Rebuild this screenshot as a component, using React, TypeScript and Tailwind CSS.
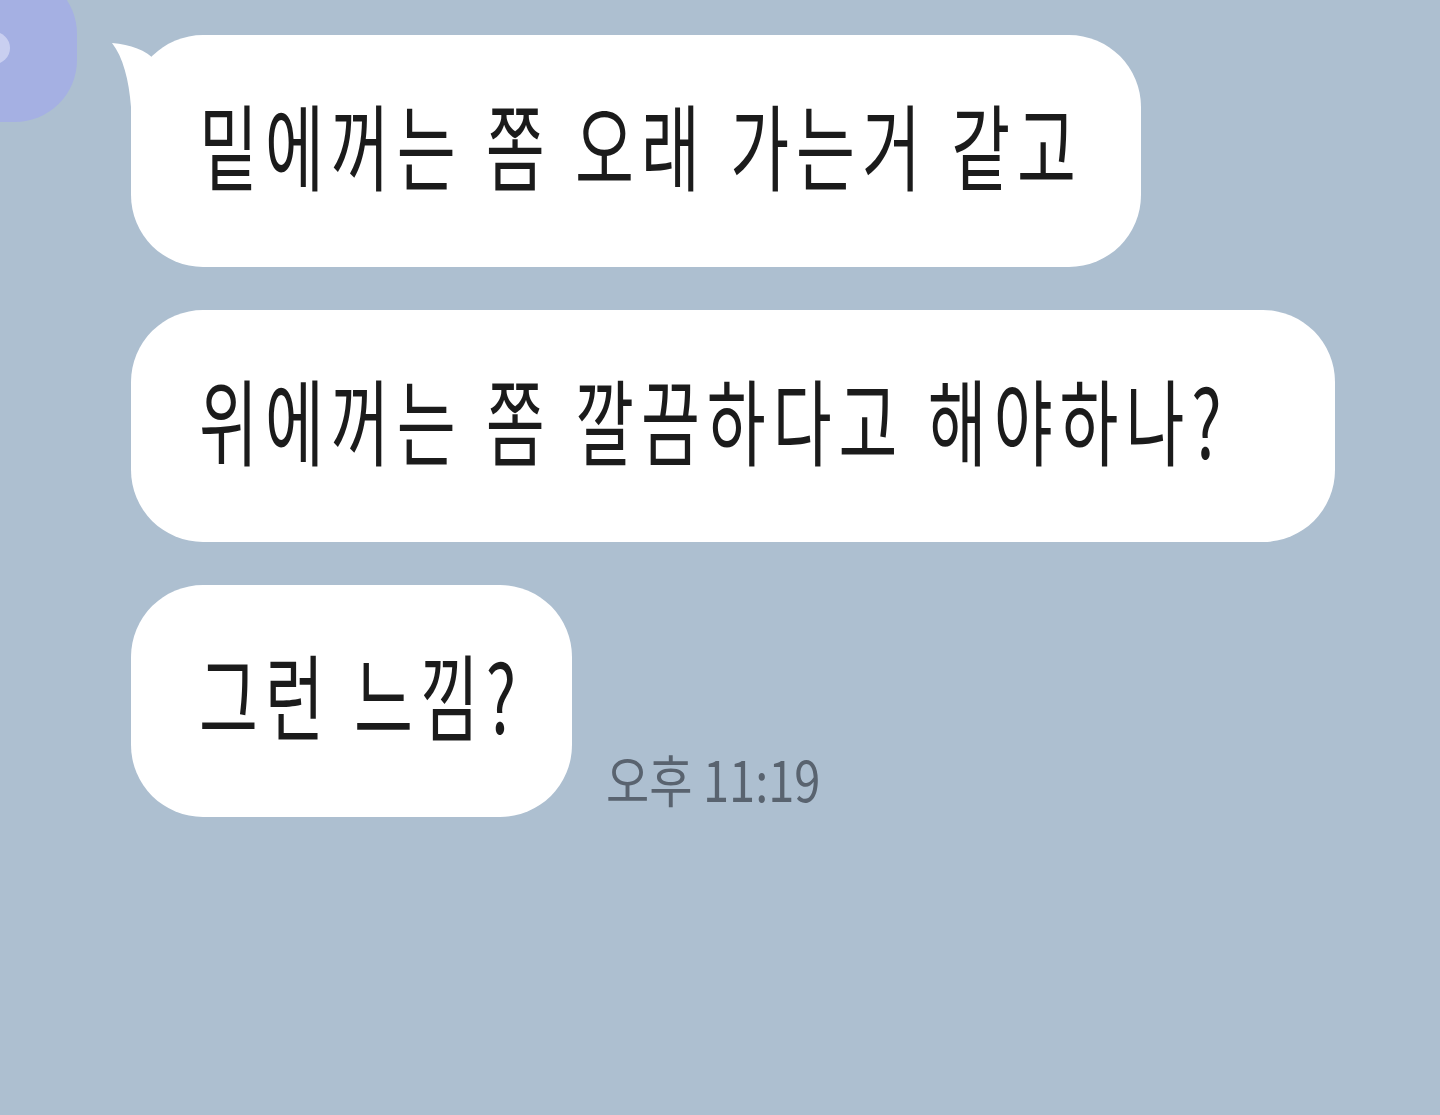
const messages = [
  { id: 1, text: "밑에꺼는 쫌 오래 가는거 같고", width: "w-[1010px]", tail: true },
  { id: 2, text: "위에꺼는 쫌 깔끔하다고 해야하나?", width: "w-[1204px]", tail: false },
  { id: 3, text: "그런 느낌?", width: "w-[441px]", tail: false },
];

function Tail() {
  // little speech-bubble tail on the first message
  return (
    <svg
      className="absolute -left-[20px] top-0 overflow-visible"
      width="60"
      height="90"
      viewBox="-20 0 60 90"
    >
      <path
        d="M -19 8 C 0 10, 14 14, 26 27 L 40 40 L 40 90 L 0 90 L 0 72 C -2 45, -8 22, -19 8 Z"
        fill="#ffffff"
      />
    </svg>
  );
}

function Bubble({ text, width, tail }: { text: string; width: string; tail: boolean }) {
  return (
    <div className={`relative ${width} h-[232px] shrink-0 bg-white rounded-[72px] flex items-center px-[68px] pb-[16px]`}>
      {tail && <Tail />}
      <span className="inline-block whitespace-nowrap text-[64px] leading-none tracking-[7px] [word-spacing:2px] text-[#1b1b1b] scale-y-[1.48]">
        {text}
      </span>
    </div>
  );
}

export default function App() {
  return (
    <div
      className="w-[1440px] h-[1115px] overflow-hidden bg-[#adbfd0] flex items-start"
      style={{ fontFamily: '"Noto Sans CJK KR", "Noto Sans", sans-serif' }}
    >
      {/* profile picture, mostly off screen */}
      <div className="relative shrink-0 -ml-[73px] -mt-[28px] w-[150px] h-[150px] rounded-[62px] bg-[#a5b0e3] overflow-hidden">
        <div className="absolute left-[51px] top-[60px] w-[32px] h-[32px] rounded-full bg-[#c9cff0]" />
      </div>

      <div className="ml-[54px] pt-[35px] flex flex-col gap-[43px]">
        {messages.map((m, i) =>
          i === messages.length - 1 ? (
            <div key={m.id} className="flex items-end">
              <Bubble text={m.text} width={m.width} tail={m.tail} />
              <span className="inline-block ml-[34px] mb-[16px] text-[47px] leading-none text-[#59636f] whitespace-nowrap scale-y-[1.18]">
                오후 11:19
              </span>
            </div>
          ) : (
            <Bubble key={m.id} text={m.text} width={m.width} tail={m.tail} />
          )
        )}
      </div>
    </div>
  );
}
